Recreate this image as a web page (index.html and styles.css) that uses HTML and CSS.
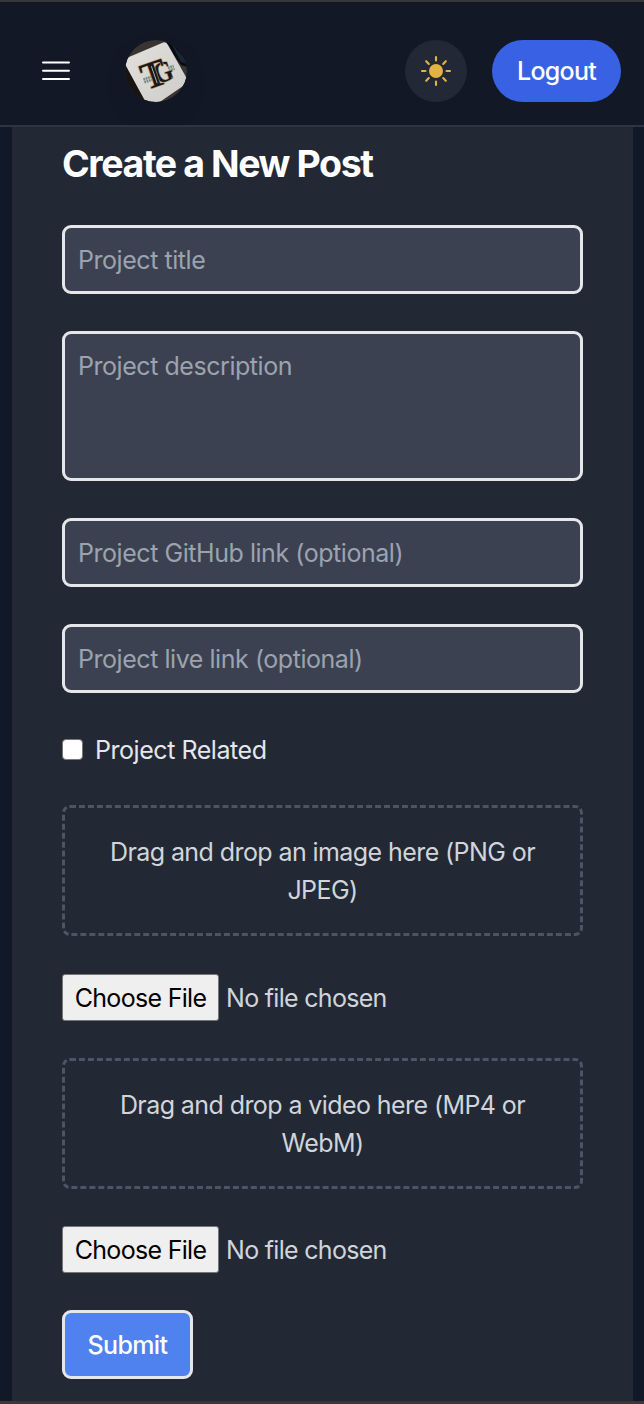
FILE: index.html
```html
<!DOCTYPE html>
<html lang="en">
<head>
<meta charset="utf-8">
<title>Create a New Post</title>
<link rel="stylesheet" href="styles.css">
</head>
<body>
<div class="page">
  <header class="navbar">
    <button class="menu" aria-label="Menu">
      <svg width="28" height="20" viewBox="0 0 28 20" stroke="#fff" stroke-width="2" stroke-linecap="round"><path d="M1 1.500h26M1 9.700h26M1 18h26"/></svg>
    </button>
    <svg class="logo" width="62" height="62" viewBox="0 0 62 62">
      <defs>
        <clipPath id="disc"><circle cx="31" cy="31" r="31"/></clipPath>
        <linearGradient id="key" x1="0" y1="0" x2="1" y2="1"><stop offset="0" stop-color="#e2e1de"/><stop offset="1" stop-color="#cdccc8"/></linearGradient>
      </defs>
      <g clip-path="url(#disc)">
        <rect width="62" height="62" fill="#393431"/>
        <path d="M40 0L62 0V27L56 25Q48 15 40 0Z" fill="#080c13"/>
        <path d="M46 3L62 21V24L56 22Z" fill="#1b2634"/>
        <path d="M0 24L24 62H0Z" fill="#171412"/>
        <path d="M2 25L21 58" stroke="#050505" stroke-width="3"/>
        <path d="M4 48l3 5" stroke="#aaa" stroke-width="1"/>
        <path d="M-1 22Q0 19 4 17L37 3Q41 1 43 5L61 37Q62 41 58 46L29 66Q22 66 19 59L1 26Z" fill="url(#key)"/>
        <g transform="rotate(-19 31 33)">
          <path d="M17 35h8M17 38h8M44 32h6M44 35h6" stroke="#7f8988" stroke-width="2.600" stroke-dasharray="1.800 .6"/>
          <g fill="#17191c" stroke="#b79960" stroke-width="1.200" paint-order="stroke" class="monogram">
            <text x="28.500" y="44" font-size="29" textLength="19" lengthAdjust="spacingAndGlyphs">G</text>
            <text x="16" y="46" font-size="38" textLength="25" lengthAdjust="spacingAndGlyphs">T</text>
          </g>
          <path d="M28.800 25V43" stroke="#ddd9d0" stroke-width=".7"/>
        </g>
        <circle cx="47" cy="37.500" r=".8" fill="#777"/>
      </g>
    </svg>
    <button class="theme" aria-label="Light theme">
      <svg width="32" height="32" viewBox="0 0 32 32"><circle cx="16" cy="16" r="7" fill="#e3b341"/><path d="M16 2v3.500M16 26.500V30M2 16h3.500M26.500 16H30M6.200 6.200l2.600 2.700M23.200 23.100l2.600 2.700M6.200 25.800l2.600-2.700M23.200 8.900l2.600-2.700" stroke="#e3b341" stroke-width="2.100" stroke-linecap="round"/></svg>
    </button>
    <button class="logout">Logout</button>
  </header>
  <main class="card">
    <h1 class="title">Create a New Post</h1>
    <form class="form">
      <input class="field" type="text" placeholder="Project title">
      <textarea class="field area" placeholder="Project description"></textarea>
      <input class="field" type="text" placeholder="Project GitHub link (optional)">
      <input class="field" type="text" placeholder="Project live link (optional)">
      <label class="check"><input class="box" type="checkbox"><span>Project Related</span></label>
      <div class="drop">Drag and drop an image here (PNG or<br>JPEG)</div>
      <div class="file"><button class="choose" type="button">Choose File</button><span>No file chosen</span></div>
      <div class="drop">Drag and drop a video here (MP4 or<br>WebM)</div>
      <div class="file"><button class="choose" type="button">Choose File</button><span>No file chosen</span></div>
      <button class="submit" type="button">Submit</button>
    </form>
  </main>
</div>
</body>
</html>
```

FILE: styles.css
```css
* { box-sizing: border-box; }
body {
  margin: 0;
  background: #111827;
  font: 25px/38px Inter, "Liberation Sans", sans-serif;
  letter-spacing: -0.45px;
}
button, input, textarea { font: inherit; letter-spacing: inherit; margin: 0; }
.page {
  height: 1404px;
  overflow: hidden;
  border-top: 2px solid #373737;
  border-bottom: 3px solid #3a3838;
  display: flex;
  flex-direction: column;
}
.navbar {
  flex: none;
  height: 125px;
  padding: 14px 23px 0 42px;
  border-bottom: 2px solid #2d3544;
  display: flex;
  align-items: center;
  background: #121826;
}
.menu { width: 28px; height: 20px; padding: 0; border: 0; background: none; display: flex; }
.logo { margin-left: 55px; border-radius: 50%; box-shadow: 0 12px 18px rgba(16, 24, 38, .35); }
.monogram { font-family: "Liberation Serif", serif; font-weight: bold; letter-spacing: 0; }
.theme {
  width: 62px;
  height: 62px;
  margin-left: auto;
  padding: 0;
  border: 0;
  border-radius: 50%;
  background: #222835;
  display: flex;
  align-items: center;
  justify-content: center;
}
.logout {
  width: 129px;
  height: 62px;
  margin-left: 25px;
  padding: 1px 0 0;
  border: 0;
  border-radius: 31px;
  background: #3862e3;
  color: #fff;
  font-weight: 500;
  letter-spacing: -0.75px;
}
.card {
  flex: 1;
  min-height: 0;
  margin: 0 11px 0 12px;
  padding: 18px 50px 0;
  background: #222935;
}
.title { margin: 0 0 42px; font-size: 37.5px; line-height: 38px; letter-spacing: -1.42px; color: #fff; }
.form { display: flex; flex-direction: column; align-items: flex-start; }
.field {
  width: 521px;
  height: 69px;
  margin-bottom: 37px;
  padding: 1px 13px 0;
  border: 3px solid #e5e7eb;
  border-radius: 9px;
  background: #3b4150;
  color: #fff;
}
.field::placeholder { color: #9ca3af; opacity: 1; }
.area { height: 150px; padding: 13px 13px 0; resize: none; display: block; }
.check { display: flex; align-items: center; gap: 12px; height: 38px; margin: 1px 0 36px; color: #e5e7eb; }
.box {
  appearance: none;
  width: 21px;
  height: 21px;
  position: relative;
  top: -1px;
  border: 1px solid #767676;
  border-radius: 4px;
  background: #fff;
}
.drop {
  width: 521px;
  height: 131px;
  margin-bottom: 38px;
  padding: 25px 0;
  border: 3px dashed #4b5563;
  border-radius: 8px;
  text-align: center;
  letter-spacing: -0.58px;
  color: #d1d5db;
}
.file {
  display: flex;
  align-items: center;
  gap: 7px;
  height: 47px;
  margin-bottom: 37px;
  letter-spacing: -0.7px;
  color: #d1d5db;
}
.file + .drop { margin-bottom: 37px; }
.choose {
  width: 157px;
  height: 47px;
  padding: 0;
  border: 1px solid #767676;
  border-radius: 3px;
  background: #efefef;
  color: #000;
}
.submit {
  width: 131px;
  height: 69px;
  padding: 0;
  border: 3px solid #e5e7eb;
  border-radius: 9px;
  background: #4f82ee;
  color: #fff;
  font-weight: 500;
  letter-spacing: -0.65px;
}
```
